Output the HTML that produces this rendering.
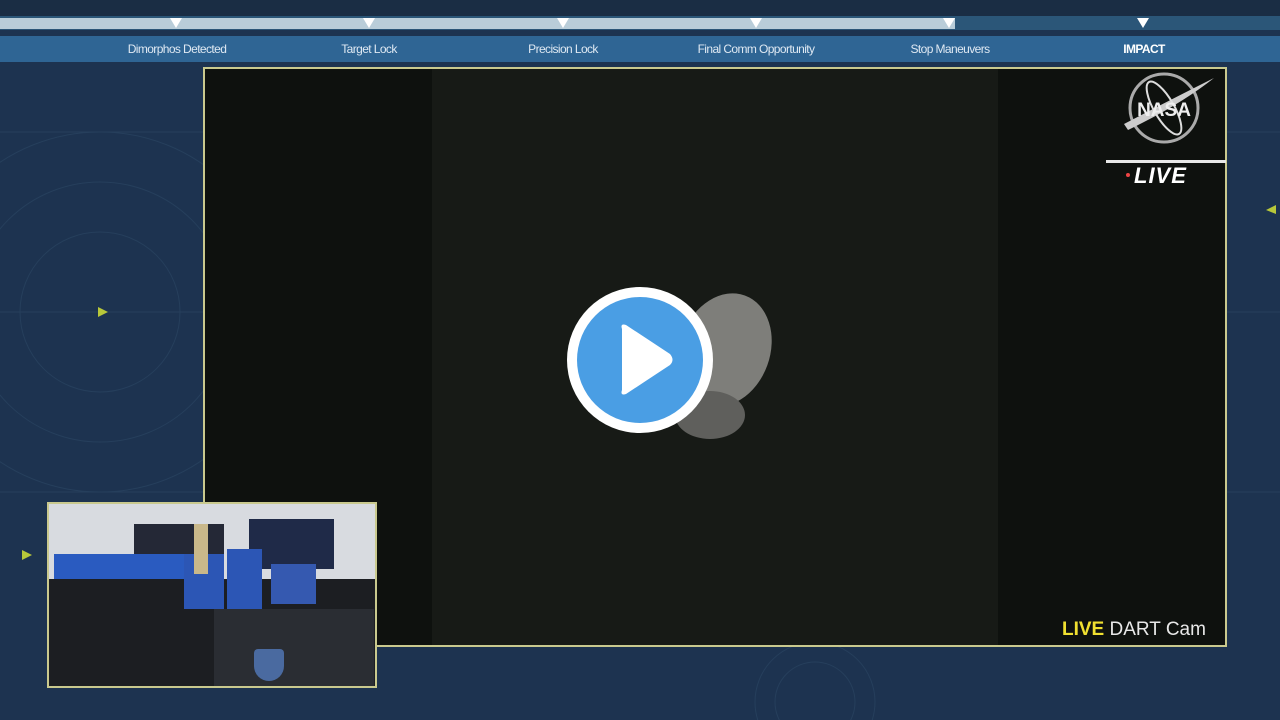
<!DOCTYPE html>
<html><head><style>
*{margin:0;padding:0;box-sizing:border-box}
html,body{width:1280px;height:720px;overflow:hidden}
body{background:#1d3350;font-family:"Liberation Sans",sans-serif;position:relative}
.abs{position:absolute}
.lbl{position:absolute;top:42px;color:#dfe9f3;font-size:12px;letter-spacing:-0.6px;transform:translateX(-50%);white-space:nowrap}
.tri{position:absolute;top:18px;width:0;height:0;border-left:6px solid transparent;border-right:6px solid transparent;border-top:10px solid #fff;transform:translateX(-50%)}
</style></head><body>
<div class="abs" style="left:0;top:0;width:1280px;height:16px;background:#1a2d44"></div>
<div class="abs" style="left:0;top:16px;width:1280px;height:14px;background:#2b5678"></div>
<div class="abs" style="left:0;top:18px;width:955px;height:11px;background:#b9cdd9"></div>
<div class="abs" style="left:0;top:36px;width:1280px;height:26px;background:#2f6594"></div>
<div class="tri" style="left:176px"></div><div class="tri" style="left:369px"></div><div class="tri" style="left:563px"></div><div class="tri" style="left:756px"></div><div class="tri" style="left:949px"></div><div class="tri" style="left:1143px"></div>
<div class="lbl" style="left:177px">Dimorphos Detected</div>
<div class="lbl" style="left:369px">Target Lock</div>
<div class="lbl" style="left:563px">Precision Lock</div>
<div class="lbl" style="left:756px">Final Comm Opportunity</div>
<div class="lbl" style="left:950px">Stop Maneuvers</div>
<div class="lbl" style="left:1144px;font-weight:bold;color:#fff">IMPACT</div>
<svg class="abs" style="left:0;top:62px" width="1280" height="658">
<g fill="none" stroke="#263f5c" stroke-width="1">
<circle cx="100" cy="250" r="180"/><circle cx="100" cy="250" r="130"/><circle cx="100" cy="250" r="80"/>
<circle cx="815" cy="640" r="60"/><circle cx="815" cy="640" r="40"/>
<line x1="0" y1="70" x2="1280" y2="70"/><line x1="0" y1="250" x2="1280" y2="250"/><line x1="0" y1="430" x2="1280" y2="430"/>
</g>
<polygon points="98,245 108,250 98,255" fill="#b8c83a"/>
<polygon points="1276,143 1266,148 1276,152" fill="#b8c83a"/>
<polygon points="22,488 32,493 22,498" fill="#b8c83a"/>
</svg>
<div class="abs" style="left:203px;top:67px;width:1024px;height:580px;border:2px solid #c9c98e;background:#0e110e"></div>
<div class="abs" style="left:432px;top:69px;width:566px;height:576px;background:#171a16"></div>
<svg class="abs" style="left:600px;top:280px" width="200" height="170">
<ellipse cx="125" cy="70" rx="45" ry="58" fill="#7e7e7a" transform="rotate(20 125 70)"/>
<ellipse cx="110" cy="135" rx="35" ry="24" fill="#5f5f5c"/>
</svg>
<div class="abs" style="left:567px;top:287px;width:146px;height:146px;border-radius:50%;background:#fff"></div>
<div class="abs" style="left:577px;top:297px;width:126px;height:126px;border-radius:50%;background:#4a9ee4"></div>
<svg class="abs" style="left:567px;top:287px" width="146" height="146"><path d="M55 42 Q53 36 59 38 L103 67 Q108 73 103 78 L59 107 Q53 109 55 103 Z" fill="#fff"/></svg>
<svg class="abs" style="left:1120px;top:70px" width="96" height="80">
<circle cx="44" cy="38" r="34" fill="none" stroke="#aaa" stroke-width="3"/>
<path d="M4 54 Q50 30 94 8 Q60 35 8 60Z" fill="#ccc"/>
<ellipse cx="44" cy="38" rx="10" ry="30" fill="none" stroke="#ddd" stroke-width="2" transform="rotate(-30 44 38)"/>
<text x="44" y="46" text-anchor="middle" font-family="Liberation Sans" font-weight="bold" font-size="19" fill="#eee">NASA</text>
</svg>
<div class="abs" style="left:1106px;top:160px;width:120px;height:3px;background:#e8e8e8"></div>
<div class="abs" style="left:1126px;top:173px;width:4px;height:4px;background:#e44;border-radius:50%"></div>
<div class="abs" style="left:1134px;top:163px;color:#fff;font-weight:bold;font-style:italic;font-size:22px;letter-spacing:1px">LIVE</div>
<div class="abs" style="left:1062px;top:619px;font-size:19px;color:#e8e8e8;white-space:nowrap"><b style="color:#f0e030">LIVE</b> DART Cam</div>
<div class="abs" style="left:47px;top:502px;width:330px;height:186px;border:2px solid #c9c98e;background:#3a4048;overflow:hidden">
<div class="abs" style="left:0;top:0;width:330px;height:75px;background:#d8dbe0"></div>
<div class="abs" style="left:200px;top:15px;width:85px;height:50px;background:#1f2a48"></div>
<div class="abs" style="left:85px;top:20px;width:90px;height:40px;background:#242836"></div>
<div class="abs" style="left:0;top:75px;width:330px;height:110px;background:#1c1e22"></div>
<div class="abs" style="left:5px;top:50px;width:130px;height:25px;background:#2a5bc0"></div>
<div class="abs" style="left:135px;top:50px;width:40px;height:55px;background:#2c56b5"></div>
<div class="abs" style="left:178px;top:45px;width:35px;height:60px;background:#2c56b5"></div>
<div class="abs" style="left:222px;top:60px;width:45px;height:40px;background:#3559b0"></div>
<div class="abs" style="left:145px;top:20px;width:14px;height:50px;background:#c9b88a"></div>
<div class="abs" style="left:165px;top:105px;width:160px;height:77px;background:#2a2d33"></div>
<div class="abs" style="left:205px;top:145px;width:30px;height:32px;background:#4a6aa0;border-radius:4px 4px 15px 15px"></div>
</div>
</body></html>
